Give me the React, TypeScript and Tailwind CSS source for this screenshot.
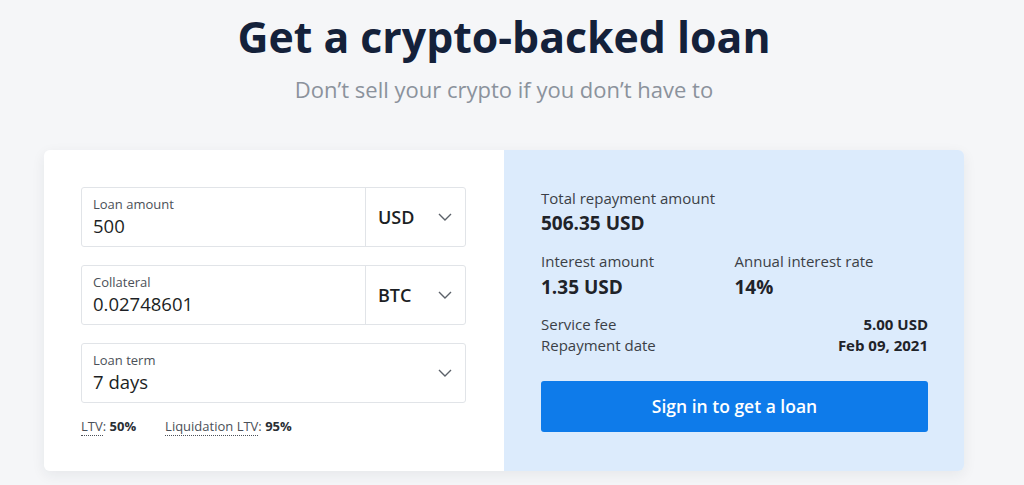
import React from "react";

const font = { fontFamily: '"Open Sans", "Noto Sans", Arial, sans-serif' };

const Chevron: React.FC = () => (
  <svg width="14" height="8" viewBox="0 0 14 8" fill="none" className="text-[#5b6169]">
    <path d="M1 1l6 6 6-6" stroke="currentColor" strokeWidth="1.4" />
  </svg>
);

interface FieldProps {
  label: string;
  value: string;
  currency?: string;
}

const Field: React.FC<FieldProps> = ({ label, value, currency }) => (
  <div className="flex h-[60px] w-full border border-[#e1e4e8] rounded-[3px] bg-white">
    <div className="flex-1 flex flex-col justify-center pl-[11px]">
      <span className="text-[13px] leading-[17px] text-[#4b5058]">{label}</span>
      <span className="text-[18.5px] leading-[25px] text-[#1c1f24] font-medium">{value}</span>
    </div>
    {currency ? (
      <div className="w-[100px] border-l border-[#e1e4e8] flex items-center justify-between pl-[12px] pr-[13px]">
        <span className="text-[18px] font-semibold text-[#1c1f24]">{currency}</span>
        <Chevron />
      </div>
    ) : (
      <div className="flex items-center pr-[13px]">
        <Chevron />
      </div>
    )}
  </div>
);

export default function App() {
  return (
    <div className="w-[1024px] h-[485px] bg-[#f5f6f8] overflow-hidden" style={font}>
      <div className="w-[1008px] flex flex-col items-center">
        <h1 className="mt-[8px] text-[42.8px] leading-[58px] font-bold text-[#14213a]">
          Get a crypto-backed loan
        </h1>
        <p className="mt-[9px] text-[22px] leading-[28px] text-[#8b929c]">
          Don’t sell your crypto if you don’t have to
        </p>

        <div className="mt-[47px] w-[920px] h-[321px] flex rounded-[6px] shadow-[0_4px_14px_rgba(30,40,60,0.07)] overflow-hidden">
          <div className="w-[460px] bg-white pl-[37px] pr-[38px] pt-[37px] flex flex-col gap-[18px]">
            <Field label="Loan amount" value="500" currency="USD" />
            <Field label="Collateral" value="0.02748601" currency="BTC" />
            <Field label="Loan term" value="7 days" />
            <div className="-mt-[3px] flex gap-[29px] text-[13px] leading-[17px] text-[#4b5058]">
              <span>
                <span className="border-b border-dotted border-[#4b5058]">LTV</span>:{" "}
                <b className="font-bold text-[#2a2e34]">50%</b>
              </span>
              <span>
                <span className="border-b border-dotted border-[#4b5058]">Liquidation LTV</span>:{" "}
                <b className="font-bold text-[#2a2e34]">95%</b>
              </span>
            </div>
          </div>

          <div className="w-[460px] bg-[#dcebfc] pl-[37px] pr-[36px] pt-[38px] flex flex-col">
            <span className="text-[15px] leading-[20px] text-[#3b3f46]">Total repayment amount</span>
            <span className="mt-[2px] text-[19px] leading-[26px] font-bold text-[#1f2329]">506.35 USD</span>
            <div className="mt-[15px] grid grid-cols-2">
              <div className="flex flex-col">
                <span className="text-[15px] leading-[20px] text-[#3b3f46]">Interest amount</span>
                <span className="mt-[3px] text-[19px] leading-[26px] font-bold text-[#1f2329]">1.35 USD</span>
              </div>
              <div className="flex flex-col">
                <span className="text-[15px] leading-[20px] text-[#3b3f46]">Annual interest rate</span>
                <span className="mt-[3px] text-[19px] leading-[26px] font-bold text-[#1f2329]">14%</span>
              </div>
            </div>
            <div className="mt-[14px] flex justify-between text-[15px] leading-[20px]">
              <span className="text-[#3b3f46]">Service fee</span>
              <span className="font-bold text-[#1f2329]">5.00 USD</span>
            </div>
            <div className="mt-[1px] flex justify-between text-[15px] leading-[20px]">
              <span className="text-[#3b3f46]">Repayment date</span>
              <span className="font-bold text-[#1f2329]">Feb 09, 2021</span>
            </div>
            <button className="mt-[26px] h-[51px] w-full rounded-[3px] bg-[#0e7bea] text-white text-[17.5px] font-semibold">
              Sign in to get a loan
            </button>
          </div>
        </div>
      </div>
    </div>
  );
}
